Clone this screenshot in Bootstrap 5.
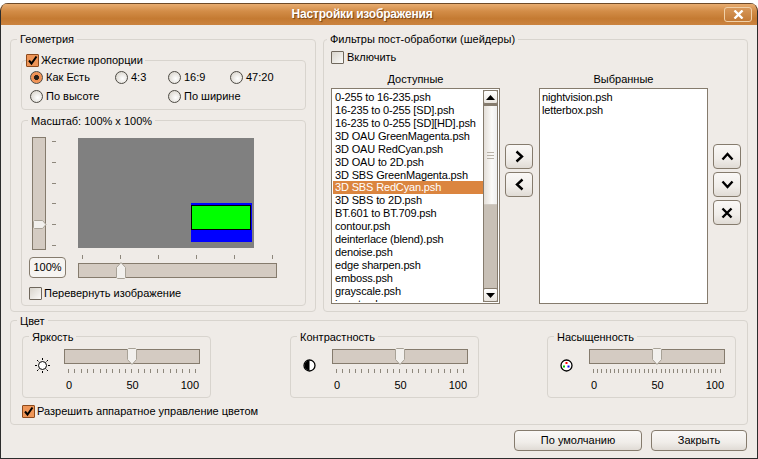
<!DOCTYPE html>
<html lang="ru">
<head>
    <meta charset="UTF-8">
    <meta name="viewport" content="width=device-width, initial-scale=1.0">
    <title>Настройки изображения</title>
    <link href="https://cdn.jsdelivr.net/npm/bootstrap@5.3.2/dist/css/bootstrap.min.css" rel="stylesheet">
    <style>
        html, body { background: #fff; margin: 0; height: 459px; overflow: hidden; }
        body { padding-top: 3px; font: 11px/13px "Liberation Sans", Arial, sans-serif; color: #000; }
        .dlg-window { width: 758px; height: 456px; background: #efebe7; border-radius: 8px 8px 0 0; overflow: hidden; position: relative; }
        .dlg-window::after { content: ""; position: absolute; inset: 0; border: 1px solid #2c2c2c; border-top: 0; border-radius: 8px 8px 0 0; pointer-events: none; }
        .dlg-title { height: 22px; padding-right: 34px; background: linear-gradient(#e8ad70, #d28c47 35%, #c47a32 70%, #cb8340); border-top: 1px solid #6e4a28; color: #fff; font-size: 12px; font-weight: 700; letter-spacing: -.2px; text-shadow: 1px 1px 1px #6e4015; position: relative; }
        .dlg-close { position: absolute; left: 724px; top: 3px; width: 28px; height: 15px; border: 1px solid #f0d0a8; border-radius: 3px; background: linear-gradient(#d8985a, #c27a36); }
        .dlg-top { padding: 14px 10px 0; gap: 7px; }

        .grp { border: 1px solid #d8d4ce; border-radius: 4px; position: relative; }
        .grp-title { position: absolute; top: -6px; left: 6px; padding: 0 3px; background: #efebe7; white-space: nowrap; }
        .grp-geo { width: 306px; height: 273px; padding: 20px 9px 0 10px; }
        .grp-geo > .grp-title { top: -7px; }
        .grp-filter { width: 425px; height: 273px; padding: 11px 0 0 7px; }
        .grp-filter > .grp-title { top: -7px; left: 3px; }
        .grp-aspect { height: 50px; padding: 10px 0 0 8px; }
        .grp-aspect .grp-title { left: 4px; top: -7px; padding: 0 2px 0 0; }
        .grp-scale { height: 186px; margin-top: 10px; padding: 16px 0 0 7px; }
        .aspect-grid { display: grid; grid-template-columns: 85px 53px 62px 70px; row-gap: 6px; }
        .scale-grid { display: grid; grid-template-columns: 49px 200px; grid-template-rows: 113px 28px; }

        .form-check-input.chk, .form-check-input.rad { width: 13px; height: 13px; margin: 0; flex: none; float: none; box-shadow: none; border: 1px solid #6f675c; background: linear-gradient(135deg, #d8d4cc, #fbfaf8); }
        .form-check-input.chk { border-radius: 1px; }
        .form-check-input.rad { border-radius: 50%; border-color: #4d4a44; background: radial-gradient(circle at 60% 60%, #fff, #ddd9d2 75%); }
        .form-check-input.chk:checked { border-color: #8e4a1c; background: #ee9557 url("data:image/svg+xml,%3Csvg xmlns='http://www.w3.org/2000/svg' viewBox='0 0 11 11'%3E%3Cpath d='M2 5.5l2.5 3L9.5 1.5' fill='none' stroke='%23000' stroke-width='2'/%3E%3C/svg%3E") center/11px no-repeat; }
        .form-check-input.rad:checked { border-color: #4d4a44; background: radial-gradient(circle, #2b2018 0 2.2px, #f08f50 2.8px, #f3a16a 100%); }
        .opt { gap: 3px; }
        .opt-chk { gap: 2px; }

        .track { background: #d4cbc2; border: 1px solid #857b6d; position: relative; }
        .track svg { position: absolute; }
        .track-v { width: 14px; height: 113px; margin-left: 3px; }
        .track-v svg { left: 0; top: 82px; }
        .track-h { width: 199px; height: 15px; }
        .track-h svg { left: 37px; top: -2px; }
        .track-c { width: 136px; height: 15px; }
        .track-c svg { left: 62px; top: -2px; }
        .ticks-v { width: 4px; height: 105px; margin: 4px 0 0 6px; }
        .ticks-v i { display: block; width: 4px; height: 1px; background: #8d877c; }
        .ticks-h { display: flex; justify-content: space-between; }
        .ticks-h i { display: block; width: 1px; height: 4px; background: #8d877c; }
        .preview { width: 176px; height: 110px; margin-top: 1px; background: #808080; position: relative; }
        .pv-blue { position: absolute; left: 113px; top: 65px; width: 61px; height: 39px; background: #0000ff; }
        .pv-green { position: absolute; left: 0; top: 2px; width: 60px; height: 25px; background: #00ff00; border: 1px solid #000; }
        .dlg-btn { padding: 0; font: inherit; color: #000; border: 1px solid #857b6d; border-radius: 4px; background: linear-gradient(#faf8f6, #f0ede9 60%, #e0dbd5); display: flex; align-items: center; justify-content: center; }
        .btn-pct { width: 37px; height: 21px; background: #f6f4f1; }
        .btn-side { width: 28px; height: 25px; }
        .btn-ok { height: 21px; }
        .side-col { width: 28px; gap: 3px; padding-top: 56px; }

        .lst-head { width: 169px; }
        .lst-box { width: 169px; height: 216px; background: #fff; border: 1px solid #857b6d; padding: 2px 1px 1px; overflow: hidden; }
        .list-group-item.lst-row { border: 0; padding: 0 0 0 2px; background: none; color: #000; line-height: 13px; height: 13px; flex: none; white-space: nowrap; font-size: 11px; letter-spacing: -.15px; }
        .list-group-item.lst-row.active { background: #db853f; color: #fff; }
        .sbar { width: 15px; flex: none; margin-top: -1px; background: #c8c0b6; border-left: 1px solid #857b6d; border-right: 1px solid #857b6d; }
        .sbar-btn { height: 14px; flex: none; border: 1px solid #857b6d; border-radius: 2px; margin: 0 -1px; background: linear-gradient(#fff, #e9e5df); display: flex; align-items: center; justify-content: center; }
        .sbar-thumb { height: 101px; flex: none; background: linear-gradient(90deg, #e4dfd9, #fbfaf8 60%, #eee); border-top: 2px solid #857b6d; border-bottom: 1px solid #cfc9c1; position: relative; }
        .sbar-grip { position: absolute; left: 3px; right: 3px; top: 46px; height: 7px; border-top: 1px solid #b8b1a7; border-bottom: 1px solid #b8b1a7; }
        .sbar-grip::after { content: ""; display: block; height: 1px; margin-top: 2px; background: #b8b1a7; }

        .grp-color { margin: 8px 10px 0; height: 105px; padding: 15px 0 0 11px; }
        .color-row { display: grid; grid-template-columns: 268px 257px 189px; }
        .grp-adj { width: 189px; height: 62px; padding: 12px 0 0 0; }
        .adj-icon { width: 41px; height: 15px; }
        .adj-scale { width: 136px; margin-left: 41px; }
        .adj-ticks { padding: 5px 4px 0; }
        .adj-labels { display: grid; grid-template-columns: 1fr auto 1fr; margin-top: 6px; padding: 0 1px 0 2px; }
        .dlg-foot { padding: 5px 11px 0 0; gap: 9px; }
    </style>
</head>
<body>
    <div class="dlg-window">
        <div class="dlg-title d-flex align-items-center justify-content-center">
            <span>Настройки изображения</span>
            <div class="dlg-close d-flex align-items-center justify-content-center">
                <svg width="11" height="9" viewBox="0 0 11 9"><path d="M1.5 .5l8 8M9.5 .5l-8 8" stroke="#fff" stroke-width="2.4"/></svg>
            </div>
        </div>

        <div class="dlg-top d-flex">
            <div class="grp grp-geo">
                <span class="grp-title">Геометрия</span>
                <div class="grp grp-aspect">
                    <label class="grp-title d-flex align-items-center opt-chk">
                        <input class="form-check-input chk" type="checkbox" checked>Жесткие пропорции
                    </label>
                    <div class="aspect-grid">
                        <label class="d-flex align-items-center opt"><input class="form-check-input rad" type="radio" name="ar" checked>Как Есть</label>
                        <label class="d-flex align-items-center opt"><input class="form-check-input rad" type="radio" name="ar">4:3</label>
                        <label class="d-flex align-items-center opt"><input class="form-check-input rad" type="radio" name="ar">16:9</label>
                        <label class="d-flex align-items-center opt"><input class="form-check-input rad" type="radio" name="ar">47:20</label>
                        <label class="d-flex align-items-center opt"><input class="form-check-input rad" type="radio" name="ar">По высоте</label>
                        <label class="d-flex align-items-center opt" style="grid-column: 3 / span 2"><input class="form-check-input rad" type="radio" name="ar">По ширине</label>
                    </div>
                </div>
                <div class="grp grp-scale">
                    <span class="grp-title">Масштаб: 100% x 100%</span>
                    <div class="scale-grid">
                        <div class="d-flex">
                            <div class="track track-v">
                                <svg width="14" height="9" viewBox="0 0 14 9"><path d="M.5 1.5L1.5 .5H9.5L13 4.5L9.5 8.5H1.5L.5 7.5Z" fill="#f2f0ed" stroke="#a8a297"/></svg>
                            </div>
                            <div class="ticks-v d-flex flex-column justify-content-between"><i></i><i></i><i></i><i></i><i></i><i></i></div>
                        </div>
                        <div class="preview">
                            <div class="pv-blue"><div class="pv-green"></div></div>
                        </div>
                        <div class="d-flex align-items-end">
                            <button class="btn dlg-btn btn-pct" type="button">100%</button>
                        </div>
                        <div class="d-flex flex-column justify-content-end">
                            <div class="ticks-h" style="width: 191px; margin: 0 0 4px 4px"><i></i><i></i><i></i><i></i><i></i><i></i></div>
                            <div class="track track-h">
                                <svg width="10" height="17" viewBox="0 0 10 17"><path d="M.5 15.5V5.5L5 .5L9.5 5.5V15.5L8.5 16.5H1.5Z" fill="#f2f0ed" stroke="#a8a297"/></svg>
                            </div>
                        </div>
                    </div>
                    <label class="d-flex align-items-center opt-chk mt-2" style="padding-top: 1px">
                        <input class="form-check-input chk" type="checkbox">Перевернуть изображение
                    </label>
                </div>
            </div>

            <div class="grp grp-filter">
                <span class="grp-title">Фильтры пост-обработки (шейдеры)</span>
                <label class="d-flex align-items-center opt" style="height: 13px">
                    <input class="form-check-input chk" type="checkbox">Включить
                </label>
                <div class="d-flex" style="margin-top: 9px; height: 15px">
                    <div class="lst-head text-center">Доступные</div>
                    <div style="width: 39px"></div>
                    <div class="lst-head text-center">Выбранные</div>
                </div>
                <div class="d-flex">
                    <div class="lst-box d-flex">
                        <div class="list-group list-group-flush flex-grow-1 rounded-0 overflow-hidden">
                            <div class="list-group-item lst-row">0-255 to 16-235.psh</div>
                            <div class="list-group-item lst-row">16-235 to 0-255 [SD].psh</div>
                            <div class="list-group-item lst-row">16-235 to 0-255 [SD][HD].psh</div>
                            <div class="list-group-item lst-row">3D OAU GreenMagenta.psh</div>
                            <div class="list-group-item lst-row">3D OAU RedCyan.psh</div>
                            <div class="list-group-item lst-row">3D OAU to 2D.psh</div>
                            <div class="list-group-item lst-row">3D SBS GreenMagenta.psh</div>
                            <div class="list-group-item lst-row active">3D SBS RedCyan.psh</div>
                            <div class="list-group-item lst-row">3D SBS to 2D.psh</div>
                            <div class="list-group-item lst-row">BT.601 to BT.709.psh</div>
                            <div class="list-group-item lst-row">contour.psh</div>
                            <div class="list-group-item lst-row">deinterlace (blend).psh</div>
                            <div class="list-group-item lst-row">denoise.psh</div>
                            <div class="list-group-item lst-row">edge sharpen.psh</div>
                            <div class="list-group-item lst-row">emboss.psh</div>
                            <div class="list-group-item lst-row">grayscale.psh</div>
                            <div class="list-group-item lst-row">invert.psh</div>
                        </div>
                        <div class="sbar d-flex flex-column">
                            <div class="sbar-btn"><svg width="9" height="5" viewBox="0 0 9 5"><path d="M4.5 0L9 5H0Z"/></svg></div>
                            <div class="sbar-thumb"><div class="sbar-grip"></div></div>
                            <div class="flex-grow-1"></div>
                            <div class="sbar-btn"><svg width="9" height="5" viewBox="0 0 9 5"><path d="M4.5 5L9 0H0Z"/></svg></div>
                        </div>
                    </div>
                    <div class="side-col d-flex flex-column" style="margin: 0 6px 0 5px">
                        <button class="btn dlg-btn btn-side" type="button"><svg width="9" height="13" viewBox="0 0 9 13"><path d="M1.5 1.5L7 6.5L1.5 11.5" fill="none" stroke="#000" stroke-width="2.4"/></svg></button>
                        <button class="btn dlg-btn btn-side" type="button"><svg width="9" height="13" viewBox="0 0 9 13"><path d="M7.5 1.5L2 6.5L7.5 11.5" fill="none" stroke="#000" stroke-width="2.4"/></svg></button>
                    </div>
                    <div class="lst-box">
                        <div class="list-group list-group-flush rounded-0">
                            <div class="list-group-item lst-row" style="padding-left: 1px">nightvision.psh</div>
                            <div class="list-group-item lst-row" style="padding-left: 1px">letterbox.psh</div>
                        </div>
                    </div>
                    <div class="side-col d-flex flex-column" style="margin-left: 5px">
                        <button class="btn dlg-btn btn-side" type="button"><svg width="13" height="9" viewBox="0 0 13 9"><path d="M1.5 7.5L6.5 2L11.5 7.5" fill="none" stroke="#000" stroke-width="2.4"/></svg></button>
                        <button class="btn dlg-btn btn-side" type="button"><svg width="13" height="9" viewBox="0 0 13 9"><path d="M1.5 1.5L6.5 7L11.5 1.5" fill="none" stroke="#000" stroke-width="2.4"/></svg></button>
                        <button class="btn dlg-btn btn-side" type="button"><svg width="12" height="12" viewBox="0 0 12 12"><path d="M1.5 1.5l9 9M10.5 1.5l-9 9" stroke="#000" stroke-width="2.4"/></svg></button>
                    </div>
                </div>
            </div>
        </div>

        <div class="grp grp-color">
            <span class="grp-title">Цвет</span>
            <div class="color-row">
                <div class="grp grp-adj">
                    <span class="grp-title">Яркость</span>
                    <div class="d-flex">
                        <div class="adj-icon d-flex justify-content-center">
                            <svg width="15" height="15" viewBox="0 0 15 15" style="margin: 9px 0 0 -3px"><circle cx="7.5" cy="7.5" r="4" fill="#fff" stroke="#000"/><path d="M7.5 0v2M7.5 13v2M0 7.5h2M13 7.5h2M2 2l1.5 1.5M11.5 11.5L13 13M13 2l-1.5 1.5M3.5 11.5L2 13" stroke="#000"/></svg>
                        </div>
                        <div class="track track-c">
                            <svg width="10" height="17" viewBox="0 0 10 17"><path d="M.5 11.5V1.5L1.5 .5H8.5L9.5 1.5V11.5L5 16.5Z" fill="#f2f0ed" stroke="#a8a297"/></svg>
                        </div>
                    </div>
                    <div class="adj-scale">
                        <div class="adj-ticks ticks-h" data-count="21"></div>
                        <div class="adj-labels"><span>0</span><span>50</span><span class="text-end">100</span></div>
                    </div>
                </div>
                <div class="grp grp-adj">
                    <span class="grp-title">Контрастность</span>
                    <div class="d-flex">
                        <div class="adj-icon d-flex justify-content-center">
                            <svg width="13" height="13" viewBox="0 0 13 13" style="margin: 10px 0 0 -5px"><circle cx="6.5" cy="6.5" r="5.5" fill="#fff" stroke="#000" stroke-width="1.3"/><path d="M6.5 1.5a5 5 0 0 0 0 10Z"/></svg>
                        </div>
                        <div class="track track-c">
                            <svg width="10" height="17" viewBox="0 0 10 17"><path d="M.5 11.5V1.5L1.5 .5H8.5L9.5 1.5V11.5L5 16.5Z" fill="#f2f0ed" stroke="#a8a297"/></svg>
                        </div>
                    </div>
                    <div class="adj-scale">
                        <div class="adj-ticks ticks-h" data-count="21"></div>
                        <div class="adj-labels"><span>0</span><span>50</span><span class="text-end">100</span></div>
                    </div>
                </div>
                <div class="grp grp-adj">
                    <span class="grp-title">Насыщенность</span>
                    <div class="d-flex">
                        <div class="adj-icon d-flex justify-content-center">
                            <svg width="13" height="13" viewBox="0 0 13 13" style="margin: 10px 0 0 -5px"><circle cx="6.5" cy="6.5" r="5.5" fill="#fff" stroke="#000" stroke-width="1.3"/><rect x="5.5" y="3" width="2" height="2" fill="#f00"/><rect x="3" y="6.5" width="2" height="2" fill="#0c0"/><rect x="7.5" y="6.5" width="2" height="2" fill="#00f"/></svg>
                        </div>
                        <div class="track track-c">
                            <svg width="10" height="17" viewBox="0 0 10 17"><path d="M.5 11.5V1.5L1.5 .5H8.5L9.5 1.5V11.5L5 16.5Z" fill="#f2f0ed" stroke="#a8a297"/></svg>
                        </div>
                    </div>
                    <div class="adj-scale">
                        <div class="adj-ticks ticks-h" data-count="31"></div>
                        <div class="adj-labels"><span>0</span><span>50</span><span class="text-end">100</span></div>
                    </div>
                </div>
            </div>
            <label class="d-flex align-items-center opt-chk" style="margin-top: 7px">
                <input class="form-check-input chk" type="checkbox" checked>Разрешить аппаратное управление цветом
            </label>
        </div>

        <div class="dlg-foot d-flex justify-content-end">
            <button class="btn dlg-btn btn-ok" type="button" style="width: 128px">По умолчанию</button>
            <button class="btn dlg-btn btn-ok" type="button" style="width: 96px">Закрыть</button>
        </div>
    </div>

    <script>
        // tick marks under the colour sliders
        document.querySelectorAll("[data-count]").forEach(row => {
            row.innerHTML = "<i></i>".repeat(Number(row.dataset.count));
        });
    </script>
    <script src="https://cdn.jsdelivr.net/npm/bootstrap@5.3.2/dist/js/bootstrap.bundle.min.js"></script>
</body>
</html>
